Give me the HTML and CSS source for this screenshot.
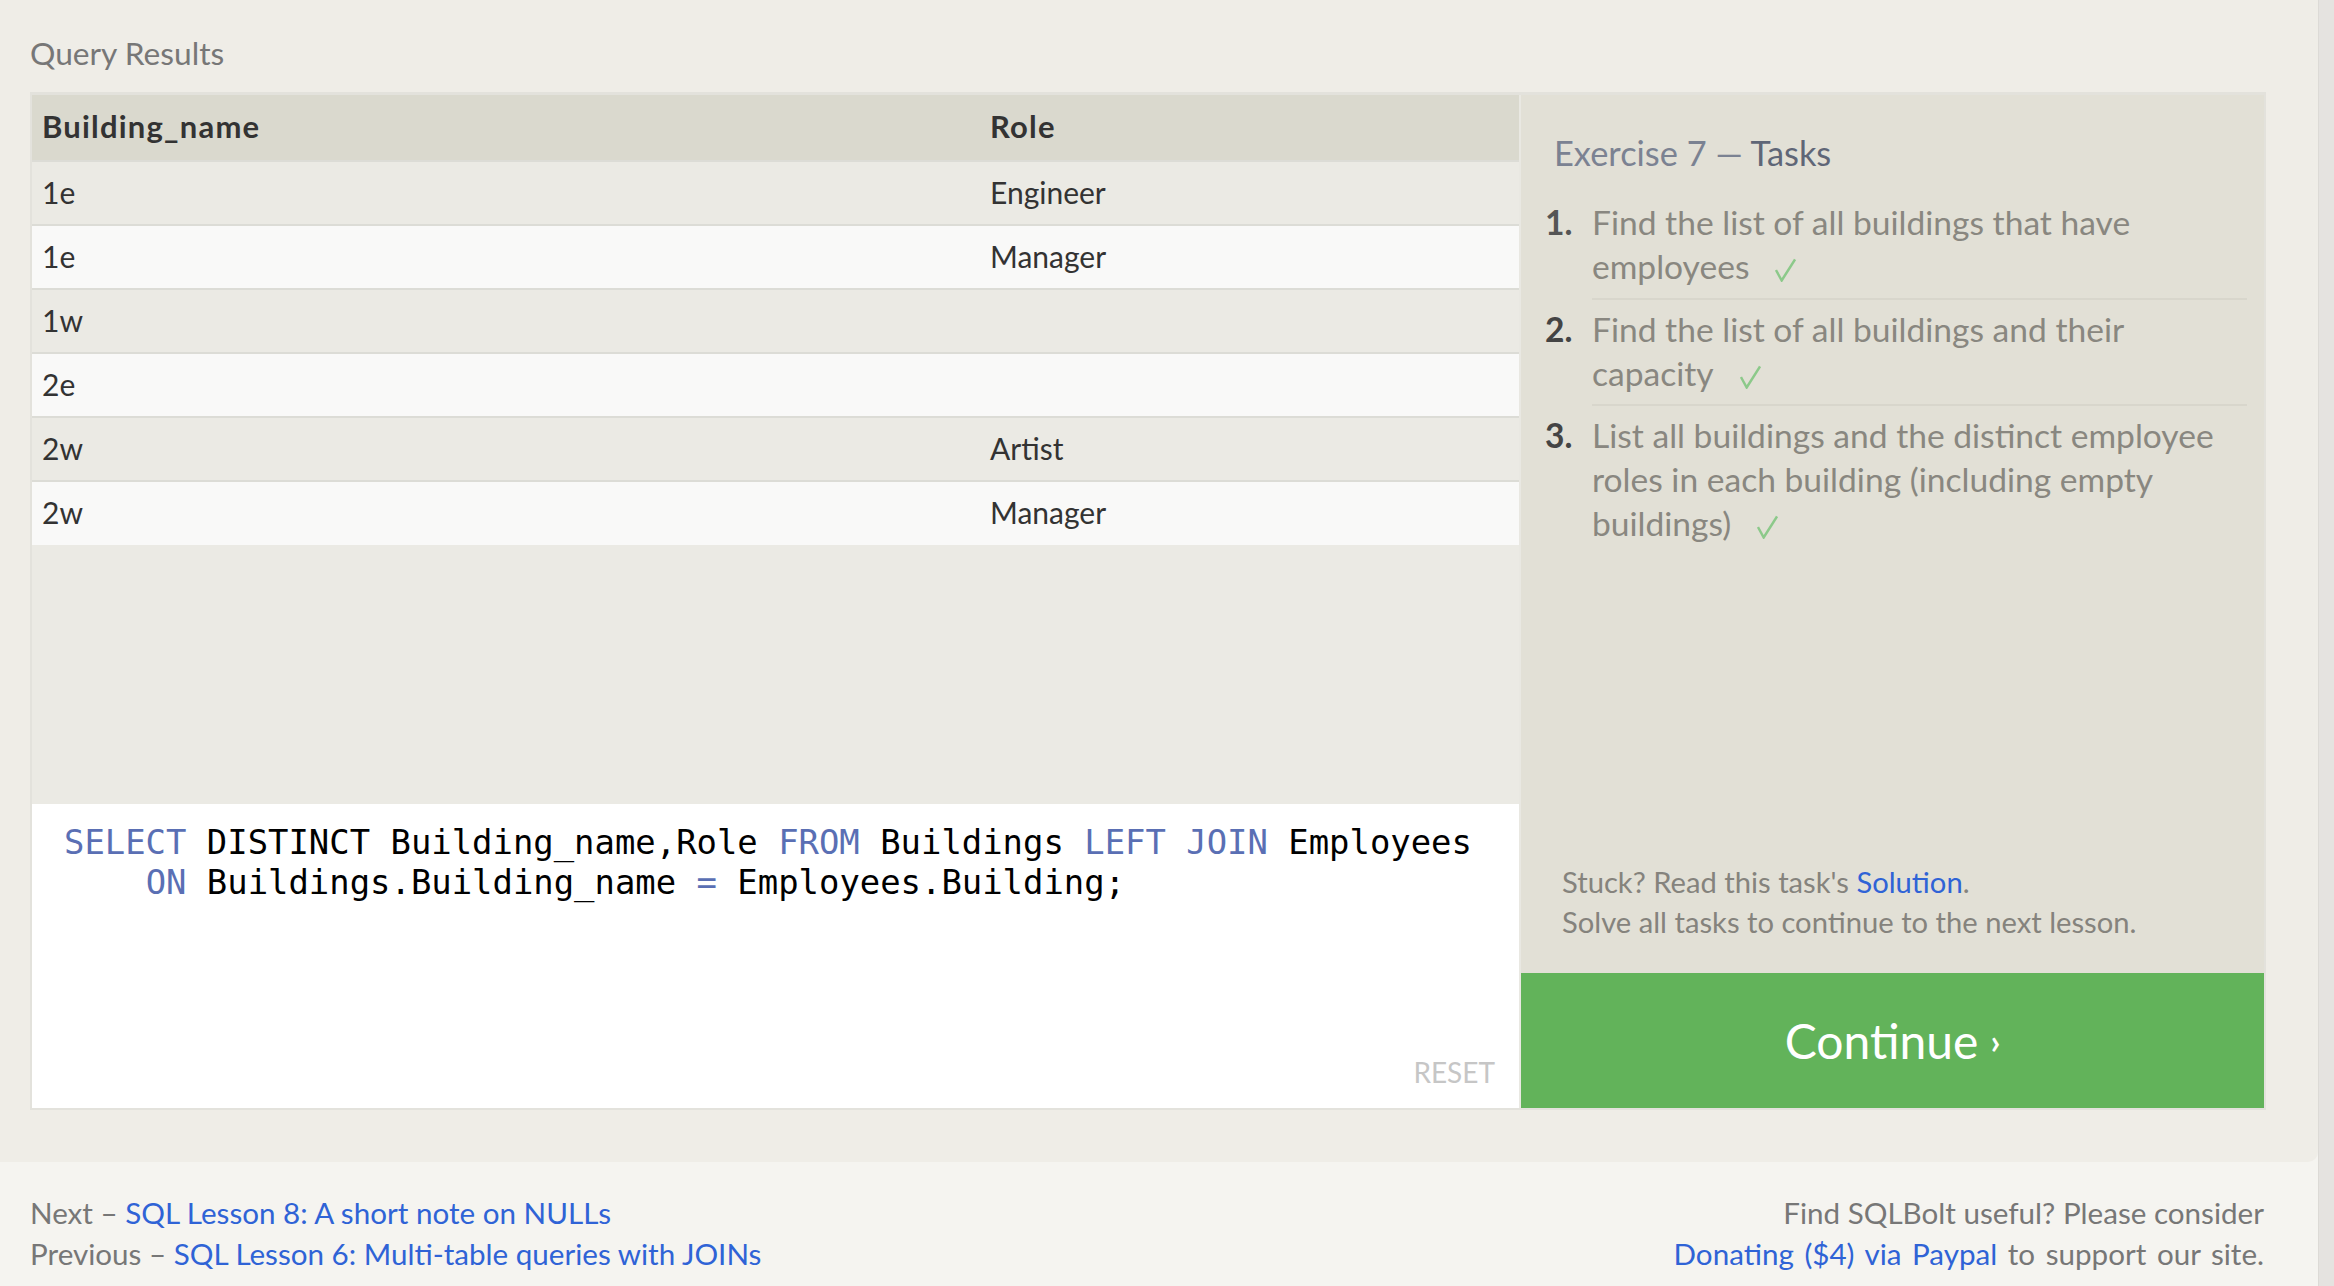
FILE: index.html
```html
<!DOCTYPE html>
<html lang="en">
<head>
<meta charset="utf-8">
<title>SQLBolt - Exercise 7</title>
<link rel="stylesheet" href="styles.css">
</head>
<body>
<div class="page">
  <div class="main-col">
    <section class="lesson">
      <h3 class="qr-title">Query Results</h3>
      <div class="workspace">
        <div class="left">
          <div class="results">
            <table class="result-table">
              <thead>
                <tr><th class="c1">Building_name</th><th>Role</th></tr>
              </thead>
              <tbody>
                <tr><td class="c1">1e</td><td>Engineer</td></tr>
                <tr><td class="c1">1e</td><td>Manager</td></tr>
                <tr><td class="c1">1w</td><td></td></tr>
                <tr><td class="c1">2e</td><td></td></tr>
                <tr><td class="c1">2w</td><td>Artist</td></tr>
                <tr><td class="c1">2w</td><td>Manager</td></tr>
              </tbody>
            </table>
          </div>
          <div class="editor">
<pre class="code"><span class="kw">SELECT</span> DISTINCT Building_name,Role <span class="kw">FROM</span> Buildings <span class="kw">LEFT</span> <span class="kw">JOIN</span> Employees
    <span class="kw">ON</span> Buildings.Building_name <span class="kw">=</span> Employees.Building;</pre>
            <span class="reset">RESET</span>
          </div>
        </div>
        <div class="right">
          <div class="tasks">
            <h4 class="tasks-title"><span class="ex">Exercise 7 — </span><span class="tk">Tasks</span></h4>
            <ol class="task-list">
              <li><span class="num">1.</span><span class="txt">Find the list of all buildings that have employees<svg class="check" viewBox="0 0 22 24" width="21" height="24"><polyline points="1,12 7,23 21,1" fill="none" stroke="#8cc98a" stroke-width="2.6"/></svg></span></li>
              <li><span class="num">2.</span><span class="txt">Find the list of all buildings and their capacity<svg class="check" viewBox="0 0 22 24" width="21" height="24"><polyline points="1,12 7,23 21,1" fill="none" stroke="#8cc98a" stroke-width="2.6"/></svg></span></li>
              <li><span class="num">3.</span><span class="txt">List all buildings and the distinct employee roles in each building (including empty buildings)<svg class="check" viewBox="0 0 22 24" width="21" height="24"><polyline points="1,12 7,23 21,1" fill="none" stroke="#8cc98a" stroke-width="2.6"/></svg></span></li>
            </ol>
          </div>
          <div class="stuck">
            <div>Stuck? Read this task's <a class="link" href="#">Solution</a>.</div>
            <div>Solve all tasks to continue to the next lesson.</div>
          </div>
          <a class="continue" href="#">Continue <span class="chev">›</span></a>
        </div>
      </div>
    </section>
    <footer class="footer">
      <div class="nav">
        <div>Next – <a class="link" href="#">SQL Lesson 8: A short note on NULLs</a></div>
        <div>Previous – <a class="link" href="#">SQL Lesson 6: Multi-table queries with JOINs</a></div>
      </div>
      <div class="donate">
        <div>Find SQLBolt useful? Please consider</div>
        <div class="donate-line"><a class="link" href="#">Donating ($4) via Paypal</a> to support our site.</div>
      </div>
    </footer>
  </div>
  <div class="strip"></div>
</div>
</body>
</html>
```

FILE: styles.css
```css
html, body {
  margin: 0;
  padding: 0;
}
body {
  background: #f5f4f0;
  font-family: "Lato", "Liberation Sans", sans-serif;
  color: #333;
}
.page {
  display: flex;
  min-height: 1286px;
}
.main-col {
  width: 2318px;
  flex: none;
  display: flex;
  flex-direction: column;
}
.strip {
  flex: 1;
  background: #e5e3e0;
  border-left: 1px solid #dcdad6;
}
.lesson {
  background: #efede7;
  border-bottom-right-radius: 10px;
  padding: 33px 0 52px 30px;
}
.qr-title {
  margin: 0 0 19px 0;
  font-size: 31.7px;
  line-height: 40px;
  font-weight: normal;
  color: #777;
}
.workspace {
  width: 2232px;
  border: 2px solid #e3e2dc;
  border-top-width: 3px;
  display: flex;
}
.left {
  width: 1487px;
  display: flex;
  flex-direction: column;
}
.results {
  height: 709px;
  background: #ebeae4;
}
.result-table {
  width: 100%;
  border-collapse: collapse;
  font-size: 30px;
}
.result-table th {
  background: #dad9ce;
  height: 66px;
  box-sizing: border-box;
  text-align: left;
  padding: 0 10px 4px 10px;
  font-size: 31px;
  letter-spacing: 1.2px;
  font-weight: bold;
  color: #333;
}
.result-table td {
  height: 64px;
  box-sizing: border-box;
  padding: 0 10px 3px 10px;
  border-top: 2px solid #dcdcd6;
  color: #333;
}
.result-table .c1 {
  width: 948px;
}
.result-table tbody tr:nth-child(odd) td {
  background: #ebeae4;
}
.result-table tbody tr:nth-child(even) td {
  background: #f9f9f8;
}
.editor {
  height: 304px;
  background: #fff;
  display: flex;
  flex-direction: column;
  box-sizing: border-box;
  padding: 19px 24px 18px 32px;
}
.code {
  margin: 0;
  font-family: "DejaVu Sans Mono", "Liberation Mono", monospace;
  font-size: 33.9px;
  line-height: 40px;
  color: #000;
}
.kw {
  color: #5a6fb4;
}
.reset {
  margin-top: auto;
  align-self: flex-end;
  font-size: 28px;
  line-height: 36px;
  color: #c6c6c6;
}
.right {
  width: 743px;
  border-left: 2px solid #e9e8e2;
  background: #e2e0d6;
  display: flex;
  flex-direction: column;
}
.tasks {
  padding: 38px 17px 0 24px;
  flex: 1;
}
.tasks-title {
  margin: 0 0 27px 9px;
  font-size: 34.4px;
  line-height: 40px;
  font-weight: normal;
}
.tasks-title .ex {
  color: #7b8292;
}
.tasks-title .tk {
  color: #5f6677;
}
.task-list {
  list-style: none;
  margin: 0;
  padding: 0;
}
.task-list li {
  display: flex;
  font-size: 33.6px;
  line-height: 44px;
  padding: 7px 0 9px 0;
}
.task-list li + li {
  border-top: 2px solid #d8d6cc;
  margin-left: 47px;
}
.task-list li + li .num {
  margin-left: -47px;
}
.task-list li:first-child {
  padding-top: 0;
  padding-bottom: 10px;
}
.num {
  width: 47px;
  flex: none;
  color: #444;
  font-weight: bold;
}
.task-list li:first-child .num {
  color: #555;
}
.txt {
  color: #898780;
}
.check {
  margin-left: 26px;
  vertical-align: -3px;
}
.stuck {
  padding: 0 0 31px 41px;
  font-size: 29.2px;
  line-height: 40px;
  color: #85837d;
}
.link {
  color: #2f63d6;
  text-decoration: none;
}
.continue {
  display: flex;
  align-items: center;
  justify-content: center;
  height: 135px;
  background: #62b35a;
  color: #fff;
  font-size: 48px;
  text-decoration: none;
}
.chev {
  font-size: 34px;
  margin-left: 12px;
  font-weight: bold;
}
.footer {
  display: flex;
  justify-content: space-between;
  padding: 30px 54px 0 30px;
  font-size: 29.6px;
  line-height: 41px;
  color: #777;
}
.donate {
  text-align: right;
}
.donate-line {
  word-spacing: 3px;
}
```
